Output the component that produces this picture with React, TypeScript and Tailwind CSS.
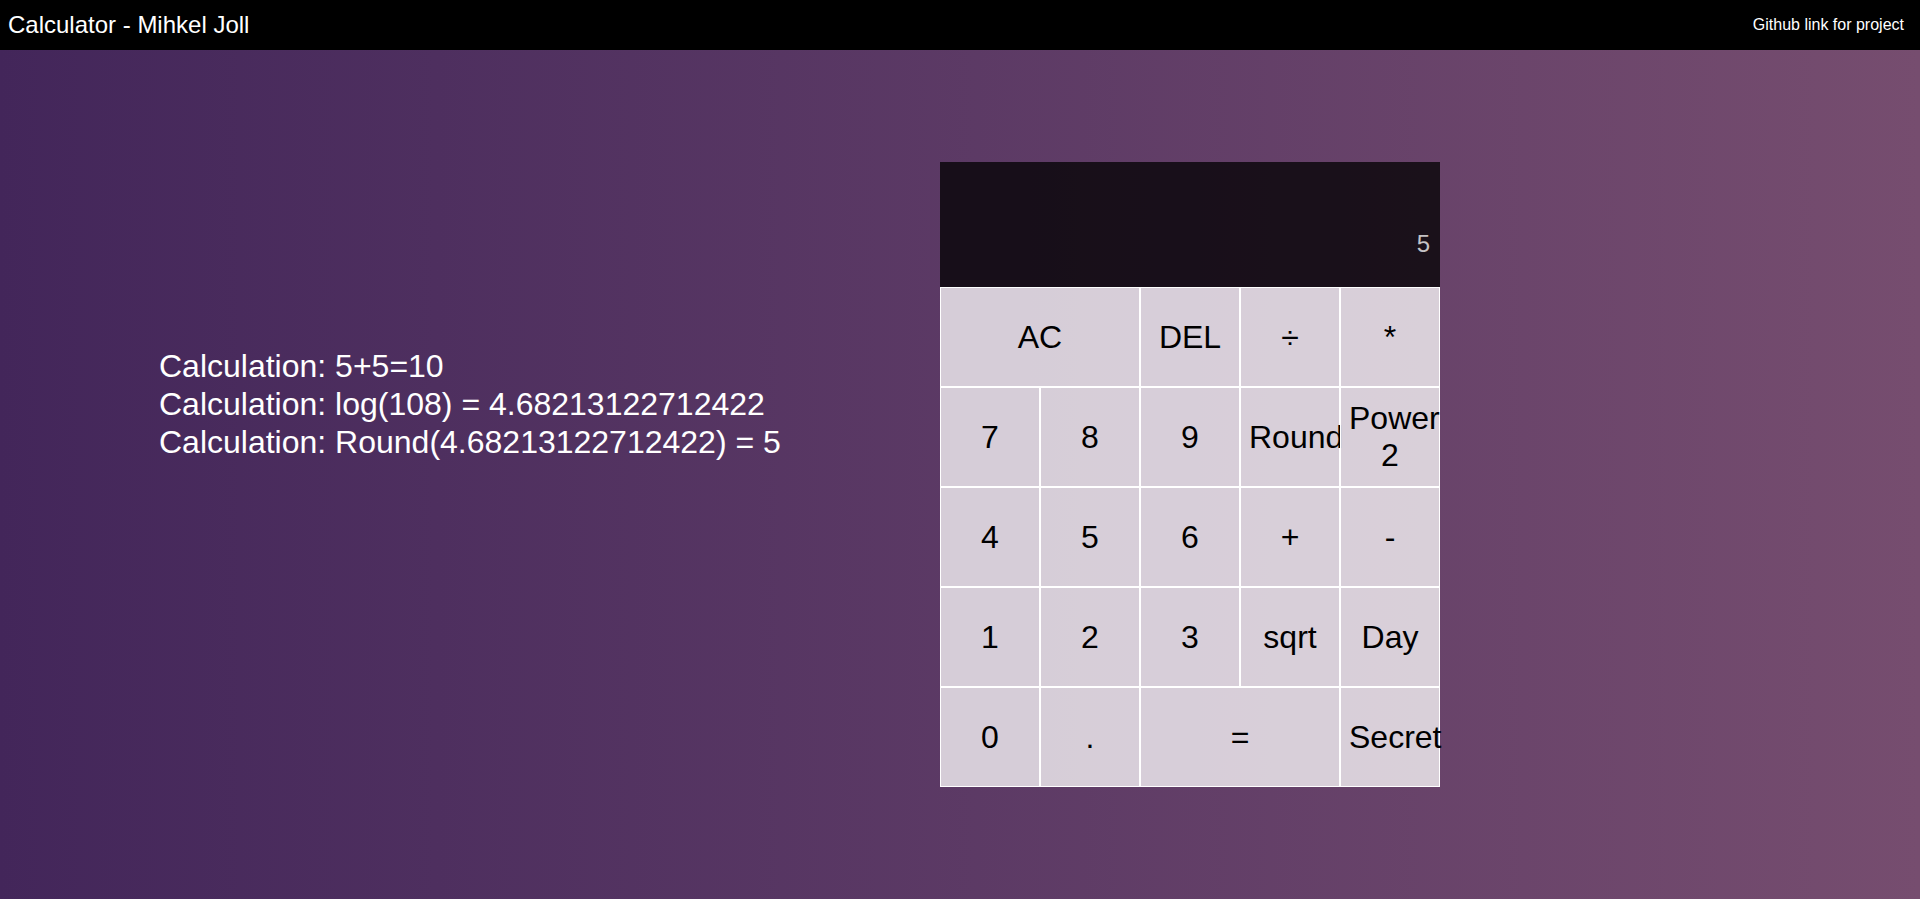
const history = [
  "Calculation: 5+5=10",
  "Calculation: log(108) = 4.68213122712422",
  "Calculation: Round(4.68213122712422) = 5",
];

interface KeyProps {
  label: string;
  wide?: boolean;
}

const keys: KeyProps[] = [
  { label: "AC", wide: true },
  { label: "DEL" },
  { label: "÷" },
  { label: "*" },
  { label: "7" },
  { label: "8" },
  { label: "9" },
  { label: "Round" },
  { label: "Power 2" },
  { label: "4" },
  { label: "5" },
  { label: "6" },
  { label: "+" },
  { label: "-" },
  { label: "1" },
  { label: "2" },
  { label: "3" },
  { label: "sqrt" },
  { label: "Day" },
  { label: "0" },
  { label: "." },
  { label: "=", wide: true },
  { label: "Secret" },
];

const Key = ({ label, wide }: KeyProps) => (
  <button
    className={
      "border border-white bg-white/75 px-2 py-px text-[32px] leading-[normal] text-black cursor-pointer " +
      (wide ? "col-span-2" : "")
    }
  >
    {label}
  </button>
);

export default function App() {
  return (
    <div className="min-h-screen flex flex-col font-['Liberation_Sans',Arial,sans-serif]">
      <header className="h-[50px] bg-black text-white flex items-center justify-between pl-2 pr-4">
        <span className="text-[24px] leading-[normal]">Calculator - Mihkel Joll</span>
        <a className="text-[16px] leading-[normal]">Github link for project</a>
      </header>
      <main className="flex-1 flex flex-row bg-linear-to-r from-[#43265a] to-[#764d6f]">
        <div className="w-[940px] pl-[159px] pt-[297px] text-white text-[32px] leading-[38px]">
          {history.map((line) => (
            <p key={line}>{line}</p>
          ))}
        </div>
        <div className="mt-[112px] grid grid-cols-[repeat(5,100px)] grid-rows-[125px_repeat(5,100px)] self-start">
          <div className="col-span-5 bg-black/75 flex flex-col items-end justify-around p-[10px] break-all">
            <div className="text-white/75 text-[24px] leading-[normal]"></div>
            <div className="text-white/75 text-[24px] leading-[normal]">5</div>
          </div>
          {keys.map((k) => (
            <Key key={k.label} label={k.label} wide={k.wide} />
          ))}
        </div>
      </main>
    </div>
  );
}
